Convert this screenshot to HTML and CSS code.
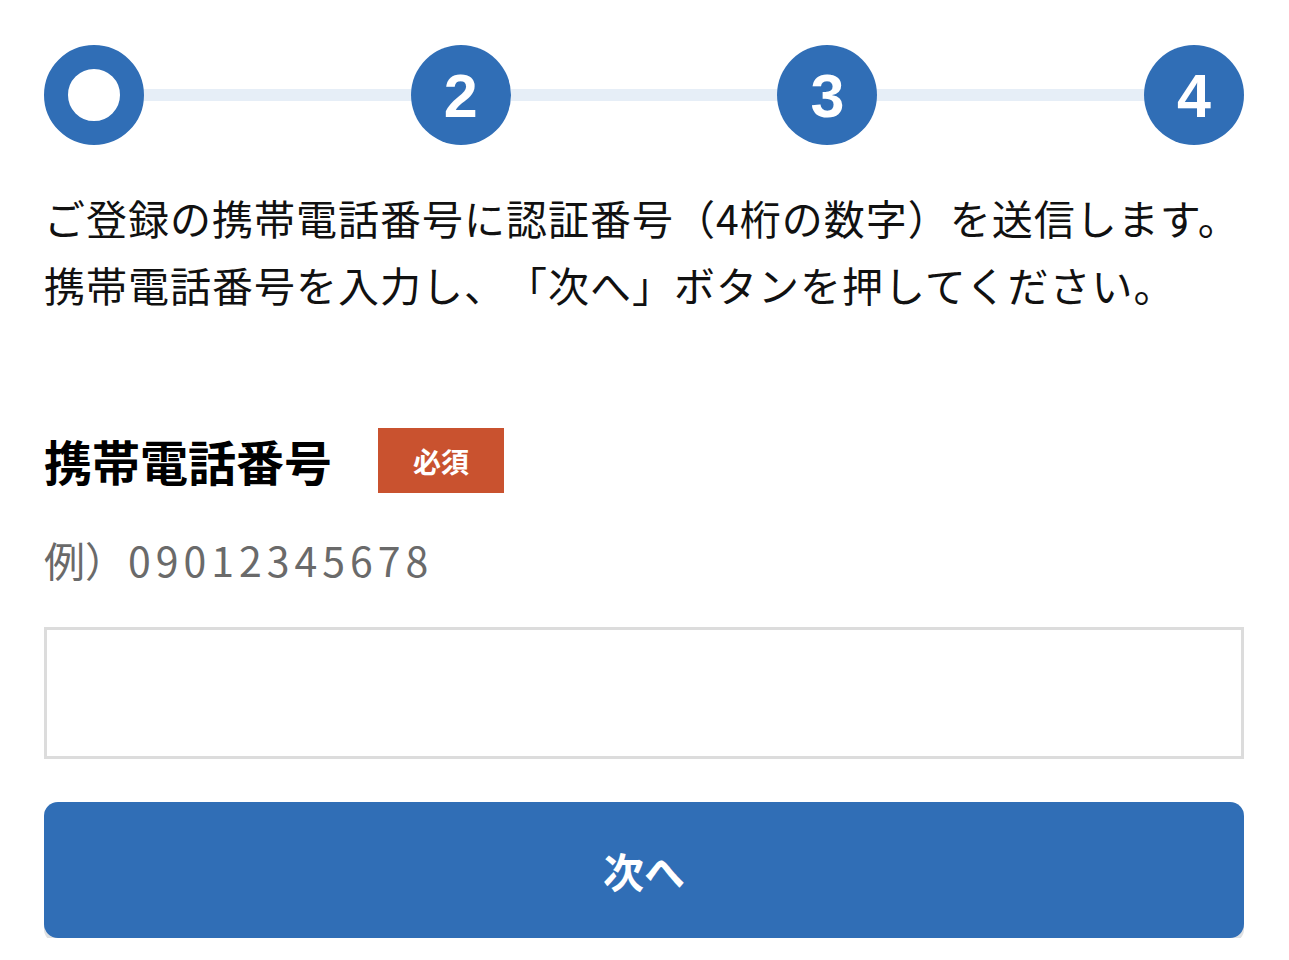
FILE: index.html
```html
<!DOCTYPE html>
<html lang="ja">
<head>
<meta charset="utf-8">
<link rel="stylesheet" href="styles.css">
</head>
<body>
<div class="page">
  <div class="stepper">
    <div class="step step-current"></div>
    <div class="connector"></div>
    <div class="step">2</div>
    <div class="connector"></div>
    <div class="step">3</div>
    <div class="connector"></div>
    <div class="step">4</div>
  </div>
  <p class="lead">ご登録の携帯電話番号に認証番号（4桁の数字）を送信します。<br>携帯電話番号を入力し、「次へ」ボタンを押してください。</p>
  <div class="field-head">
    <h2 class="field-label">携帯電話番号</h2>
    <span class="badge">必須</span>
  </div>
  <p class="example">例）<span class="example-num">09012345678</span></p>
  <input class="text-input" type="tel" aria-label="携帯電話番号">
  <button class="primary-btn" type="button">次へ</button>
</div>
</body>
</html>
```
FILE: styles.css
```css
html, body {
  margin: 0;
  padding: 0;
  background: #ffffff;
}
body {
  font-family: "Noto Sans CJK JP", "Noto Sans", sans-serif;
  color: #111;
  text-spacing-trim: space-all;
}
.page {
  padding: 45px 45px 0 44px;
}
.stepper {
  display: flex;
  align-items: center;
}
.step {
  box-sizing: border-box;
  width: 100px;
  height: 100px;
  border-radius: 50%;
  background: #306eb6;
  color: #fff;
  display: flex;
  align-items: center;
  justify-content: center;
  font-family: "Liberation Sans", Arial, sans-serif;
  font-weight: bold;
  font-size: 61px;
  line-height: 1;
  padding-top: 2px;
  flex: none;
}
.step-current {
  background: #fff;
  border: 24px solid #306eb6;
  padding-top: 0;
}
.connector {
  flex: 1;
  height: 12px;
  background: #e6eef7;
}
.lead {
  margin: 39px 0 0 0;
  font-size: 41px;
  line-height: 67px;
  letter-spacing: 1px;
  color: #111;
  white-space: nowrap;
  text-spacing-trim: space-all;
}
.field-head {
  display: flex;
  align-items: center;
  gap: 46px;
  margin-top: 110px;
}
.field-label {
  margin: 0;
  font-size: 48px;
  font-weight: bold;
  line-height: 65px;
  color: #000;
}
.badge {
  display: flex;
  align-items: center;
  justify-content: center;
  width: 126px;
  height: 65px;
  background: #c9522f;
  color: #fff;
  font-size: 28px;
  font-weight: bold;
}
.example {
  margin: 41px 0 0 0;
  font-size: 41px;
  line-height: 50px;
  color: #6a6a6a;
  text-spacing-trim: space-all;
}
.example-num {
  letter-spacing: 5px;
  margin-left: 2px;
}
.text-input {
  display: block;
  box-sizing: border-box;
  width: 100%;
  height: 132px;
  margin-top: 43px;
  border: 3px solid #dcdcdc;
  border-radius: 0;
  background: #fff;
  outline: none;
  font-size: 41px;
  padding: 0 20px;
}
.primary-btn {
  display: block;
  width: 100%;
  height: 136px;
  margin-top: 43px;
  border: none;
  border-radius: 14px;
  background: #306eb6;
  color: #fff;
  font-family: "Noto Sans CJK JP", sans-serif;
  font-size: 41px;
  font-weight: bold;
  box-shadow: 0 5px 0 #dfe1e3;
}
```
